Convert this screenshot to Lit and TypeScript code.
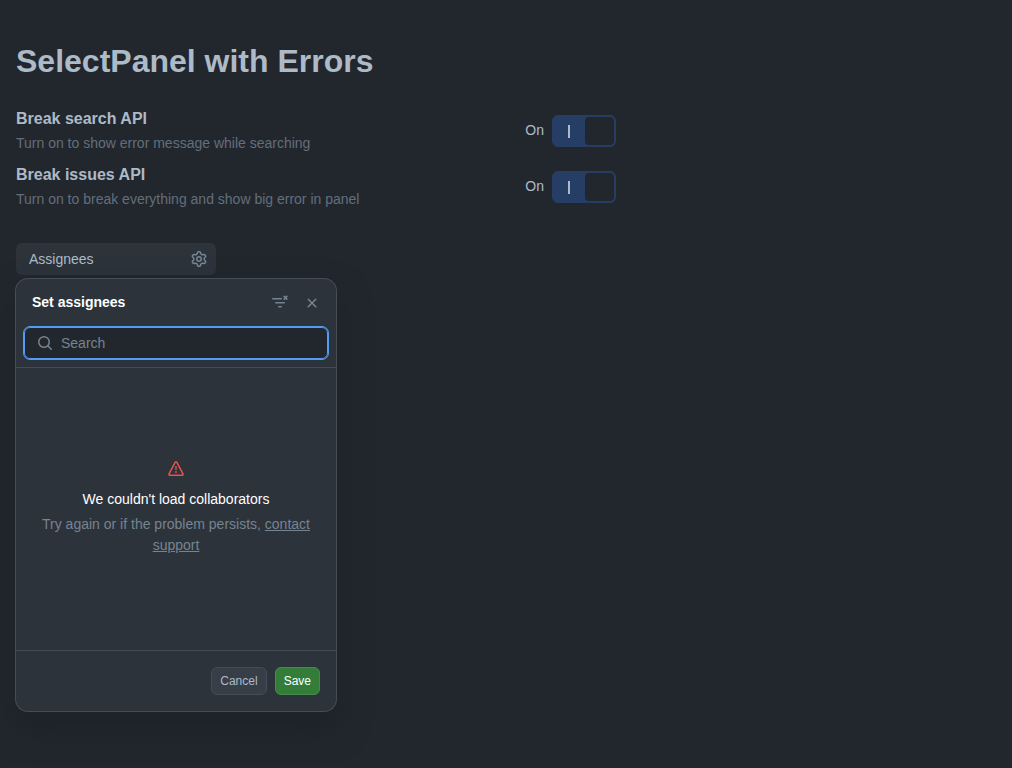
import { LitElement, html, css, svg } from "lit";
import { customElement, property } from "lit/decorators.js";

const gear = svg`<path d="M8 0a8.2 8.2 0 0 1 .701.031C9.444.095 9.99.645 10.16 1.29l.288 1.107c.018.066.079.158.212.224.231.114.454.243.668.386.123.082.233.09.299.071l1.103-.303c.644-.176 1.392.021 1.82.63.27.385.506.792.704 1.218.315.675.111 1.422-.364 1.891l-.814.806c-.049.048-.098.147-.088.294.016.257.016.515 0 .772-.01.147.038.246.088.294l.814.806c.475.469.679 1.216.364 1.891a7.977 7.977 0 0 1-.704 1.217c-.428.61-1.176.807-1.82.63l-1.102-.302c-.067-.019-.177-.011-.3.071a5.909 5.909 0 0 1-.668.386c-.133.066-.194.158-.211.224l-.29 1.106c-.168.646-.715 1.196-1.458 1.26a8.006 8.006 0 0 1-1.402 0c-.743-.064-1.289-.614-1.458-1.26l-.289-1.106c-.018-.066-.079-.158-.212-.224a5.738 5.738 0 0 1-.668-.386c-.123-.082-.233-.09-.299-.071l-1.103.303c-.644.176-1.392-.021-1.82-.63a8.12 8.12 0 0 1-.704-1.218c-.315-.675-.111-1.422.363-1.891l.815-.806c.05-.048.098-.147.088-.294a6.214 6.214 0 0 1 0-.772c.01-.147-.038-.246-.088-.294l-.815-.806C.635 6.045.431 5.298.746 4.623a7.92 7.92 0 0 1 .704-1.217c.428-.61 1.176-.807 1.82-.63l1.102.302c.067.019.177.011.3-.071.214-.143.437-.272.668-.386.133-.066.194-.158.211-.224l.29-1.106C6.009.645 6.556.095 7.299.03 7.53.01 7.764 0 8 0Zm-.571 1.525c-.036.003-.108.036-.137.146l-.289 1.105c-.147.561-.549.967-.998 1.189-.173.086-.34.183-.5.29-.417.278-.97.423-1.529.27l-1.103-.303c-.109-.03-.175.016-.195.045-.22.312-.412.644-.573.99-.014.031-.021.11.059.19l.815.806c.411.406.562.957.53 1.456a4.709 4.709 0 0 0 0 .582c.032.499-.119 1.05-.53 1.456l-.815.806c-.081.08-.073.159-.059.19.162.346.353.677.573.989.02.03.085.076.195.046l1.102-.303c.56-.153 1.113-.008 1.53.27.161.107.328.204.501.29.447.222.85.629.997 1.189l.289 1.105c.029.109.101.143.137.146a6.6 6.6 0 0 0 1.142 0c.036-.003.108-.036.137-.146l.289-1.105c.147-.561.549-.967.998-1.189.173-.086.34-.183.5-.29.417-.278.97-.423 1.529-.27l1.103.303c.109.029.175-.016.195-.045.22-.313.411-.644.573-.99.014-.031.021-.11-.059-.19l-.815-.806c-.411-.406-.562-.957-.53-1.456a4.709 4.709 0 0 0 0-.582c-.032-.499.119-1.05.53-1.456l.815-.806c.081-.08.073-.159.059-.19a6.464 6.464 0 0 0-.573-.989c-.02-.03-.085-.076-.195-.046l-1.102.303c-.56.153-1.113.008-1.53-.27a4.44 4.44 0 0 0-.501-.29c-.447-.222-.85-.629-.997-1.189l-.289-1.105c-.029-.11-.101-.143-.137-.146a6.6 6.6 0 0 0-1.142 0ZM11 8a3 3 0 1 1-6 0 3 3 0 0 1 6 0ZM9.5 8a1.5 1.5 0 1 0-3.001.001A1.5 1.5 0 0 0 9.5 8Z"/>`;
const cross = svg`<path d="M3.72 3.72a.75.75 0 0 1 1.06 0L8 6.94l3.22-3.22a.749.749 0 0 1 1.275.326.749.749 0 0 1-.215.734L9.06 8l3.22 3.22a.749.749 0 0 1-.326 1.275.749.749 0 0 1-.734-.215L8 9.06l-3.22 3.22a.751.751 0 0 1-1.042-.018.751.751 0 0 1-.018-1.042L6.94 8 3.72 4.78a.75.75 0 0 1 0-1.06Z"/>`;
const magnifier = svg`<path d="M10.68 11.74a6 6 0 0 1-7.922-8.982 6 6 0 0 1 8.982 7.922l3.04 3.04a.749.749 0 0 1-.326 1.275.749.749 0 0 1-.734-.215ZM11.5 7a4.499 4.499 0 1 0-8.997 0A4.499 4.499 0 0 0 11.5 7Z"/>`;
const alert = svg`<path d="M6.457 1.047c.659-1.234 2.427-1.234 3.086 0l6.082 11.378A1.75 1.75 0 0 1 14.082 15H1.918a1.75 1.75 0 0 1-1.543-2.575Zm1.763.707a.25.25 0 0 0-.44 0L1.698 13.132a.25.25 0 0 0 .22.368h12.164a.25.25 0 0 0 .22-.368Zm.53 3.996v2.5a.75.75 0 0 1-1.5 0v-2.5a.75.75 0 0 1 1.5 0ZM9 11a1 1 0 1 1-2 0 1 1 0 0 1 2 0Z"/>`;
const filterRemove = svg`<g fill="none" stroke="currentColor" stroke-width="1.5" stroke-linecap="round"><path d="M.75 3.75h8.5M3.75 7.75h8.5M6.75 11.75h2.5"/><path d="M12.1 1.35l2.8 2.8M14.9 1.35l-2.8 2.8"/></g>`;

const icon = (shape: unknown, name: string) =>
  html`<svg class=${name} viewBox="0 0 16 16" width="16" height="16" fill="currentColor" aria-hidden="true">${shape}</svg>`;

@customElement("toggle-row")
class ToggleRow extends LitElement {
  @property() label = "";
  @property() caption = "";

  static styles = css`
    :host { display: flex; align-items: center; width: 600px; height: 48px; }
    .text { flex: 1; padding-bottom: 2px; }
    .label { font-size: 16px; font-weight: 700; line-height: 24px; }
    .caption { font-size: 14px; line-height: 21px; margin-top: 2px; color: #636e7b; }
    .state { font-size: 14px; line-height: 21px; margin-right: 8px; padding-bottom: 1px; }
    .switch {
      box-sizing: border-box; width: 64px; height: 32px; border: 1px solid #263e66;
      border-radius: 6px; background: #263e66; display: flex; padding: 1px;
    }
    .mark { flex: 1; display: flex; align-items: center; justify-content: center; }
    .bar { width: 2px; height: 13px; background: #adbac7; margin-top: 1px; margin-right: 1px; }
    .knob { width: 29px; height: 28px; border-radius: 4px; background: #22272e; }
  `;

  render() {
    return html`
      <div class="text">
        <div class="label">${this.label}</div>
        <div class="caption">${this.caption}</div>
      </div>
      <span class="state">On</span>
      <div class="switch" role="switch" aria-checked="true">
        <span class="mark"><span class="bar"></span></span>
        <span class="knob"></span>
      </div>
    `;
  }
}

@customElement("select-panel")
class SelectPanel extends LitElement {
  static styles = css`
    :host {
      display: flex; flex-direction: column; width: 320px; height: 432px;
      border-radius: 12px; background: #2d333b; color: #768390; font-size: 14px;
      box-shadow: 0 0 0 1px #444c56, 0 16px 32px rgba(28, 33, 40, 0.85);
    }
    svg { display: block; }
    .head { display: flex; align-items: center; height: 32px; padding: 8px 8px 8px 16px; }
    .title { flex: 1; color: #fff; font-size: 14px; line-height: 21px; font-weight: 700; margin: 0; padding-bottom: 2px; }
    .action { width: 32px; height: 32px; display: grid; place-items: center; }
    .search {
      box-sizing: border-box; display: flex; align-items: center; height: 32px; margin: 0 8px 8px;
      padding-left: 12px; gap: 8px; border-radius: 6px; background: #22272e;
      border: 1px solid #539bf5; outline: 1px solid #539bf5; line-height: 20px;
    }
    .body {
      flex: 1; display: flex; flex-direction: column; align-items: center; justify-content: center;
      border-top: 1px solid #444c56; border-bottom: 1px solid #444c56; text-align: center; padding: 0 24px 2px;
    }
    .alert { color: #e5534b; }
    .message { color: #fff; line-height: 21px; margin-top: 12px; }
    .hint { line-height: 21px; margin-top: 4px; }
    .link { color: inherit; text-decoration: underline; }
    .foot { display: flex; justify-content: flex-end; gap: 8px; padding: 16px; }
    .button {
      box-sizing: border-box; height: 28px; padding: 0 8px; font: 12px/20px "Liberation Sans", Arial, sans-serif;
      border-radius: 6px; border: 1px solid #444c56; background: #373e47; color: #adbac7;
    }
    .save { border-color: #468b4b; background: #347d39; color: #fff; }
  `;

  render() {
    return html`
      <div class="head">
        <h2 class="title">Set assignees</h2>
        <span class="action">${icon(filterRemove, "filter")}</span>
        <span class="action">${icon(cross, "close")}</span>
      </div>
      <div class="search">${icon(magnifier, "glass")}<span>Search</span></div>
      <div class="body">
        ${icon(alert, "alert")}
        <div class="message">We couldn't load collaborators</div>
        <div class="hint">Try again or if the problem persists, <a class="link">contact support</a></div>
      </div>
      <div class="foot">
        <button class="button">Cancel</button>
        <button class="button save">Save</button>
      </div>
    `;
  }
}

@customElement("app-root")
class AppRoot extends LitElement {
  static styles = css`
    :host {
      display: block; box-sizing: border-box; height: 768px; padding: 37px 16px 0; overflow: hidden;
      background: #22272e; color: #adbac7; font-family: "Liberation Sans", Arial, sans-serif;
    }
    .heading { font-size: 32px; line-height: 48px; font-weight: 700; margin: 0 0 22px; }
    .settings { display: flex; flex-direction: column; gap: 8px; }
    .trigger {
      box-sizing: border-box; width: 200px; height: 32px; margin: 32px 0 4px; padding: 0 9px 0 13px;
      display: flex; align-items: center; justify-content: space-between;
      font-size: 14px; background: #2d333b; border-radius: 6px;
    }
    .gear { color: #768390; }
  `;

  render() {
    return html`
      <h1 class="heading">SelectPanel with Errors</h1>
      <div class="settings">
        <toggle-row label="Break search API" caption="Turn on to show error message while searching"></toggle-row>
        <toggle-row label="Break issues API" caption="Turn on to break everything and show big error in panel"></toggle-row>
      </div>
      <div class="trigger"><span>Assignees</span>${icon(gear, "gear")}</div>
      <select-panel></select-panel>
    `;
  }
}
